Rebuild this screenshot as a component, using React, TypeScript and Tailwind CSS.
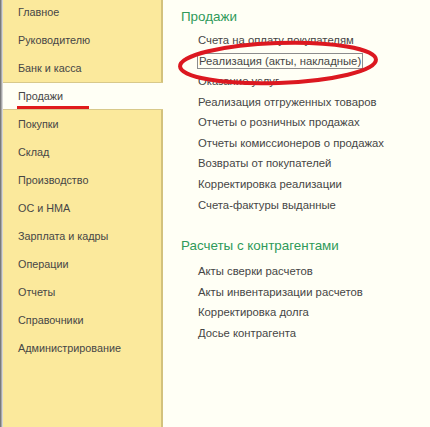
import React from 'react'

const sections = [
  'Главное',
  'Руководителю',
  'Банк и касса',
  'Продажи',
  'Покупки',
  'Склад',
  'Производство',
  'ОС и НМА',
  'Зарплата и кадры',
  'Операции',
  'Отчеты',
  'Справочники',
  'Администрирование',
]

const sales = [
  'Счета на оплату покупателям',
  'Реализация (акты, накладные)',
  'Оказание услуг',
  'Реализация отгруженных товаров',
  'Отчеты о розничных продажах',
  'Отчеты комиссионеров о продажах',
  'Возвраты от покупателей',
  'Корректировка реализации',
  'Счета-фактуры выданные',
]

const settlements = [
  'Акты сверки расчетов',
  'Акты инвентаризации расчетов',
  'Корректировка долга',
  'Досье контрагента',
]

export default function App() {
  return (
    <div
      className="relative flex h-[427px] w-[430px] overflow-hidden bg-[#fffff5] text-[#464646]"
      style={{ fontFamily: '"Liberation Sans", Arial, sans-serif' }}
    >
      {/* left window edge */}
      <div className="flex w-[3px] shrink-0">
        <div className="w-px bg-[#7a7a7a]" />
        <div className="w-px bg-[#a8a8a8]" />
        <div className="w-px bg-[#d6d6d6]" />
      </div>

      {/* sections panel */}
      <nav className="flex w-[160px] shrink-0 flex-col border-r-2 border-[#d3c27c] bg-[#fbe99c] text-[10.8px]">
        <div className="mt-[-2px] flex flex-col">
          {sections.map(s => {
            const active = s === 'Продажи'
            return (
              <div
                key={s}
                className={`relative flex h-[28px] items-center pl-[15px] ${
                  active ? 'mr-[-2px] border-y border-[#d8c98a] bg-[#fffff5]' : ''
                }`}
              >
                {s}
                {active && <div className="absolute bottom-[0px] left-[14px] h-[3px] w-[72px] bg-[#e01b1b]" />}
              </div>
            )
          })}
        </div>
      </nav>

      {/* content */}
      <main className="flex flex-1 flex-col pl-[18px] pt-[8px] text-[11.3px]">
        <h2 className="text-[13.4px] leading-[18px] text-[#2f9a5a]">Продажи</h2>
        <ul className="mt-[4px] flex flex-col pl-[16px]">
          {sales.map((s, i) => (
            <li key={s} className="flex h-[20.6px] items-center">
              <span className={i === 1 ? 'border border-[#8c8c8c] px-px leading-[14px]' : 'px-px'}>{s}</span>
            </li>
          ))}
        </ul>
        <h2 className="mt-[22px] text-[13.4px] leading-[18px] text-[#2f9a5a]">Расчеты с контрагентами</h2>
        <ul className="mt-[6px] flex flex-col pl-[16px]">
          {settlements.map(s => (
            <li key={s} className="flex h-[20.6px] items-center px-px">
              {s}
            </li>
          ))}
        </ul>
      </main>

      {/* hand-drawn highlight */}
      <svg className="pointer-events-none absolute left-0 top-0" width="430" height="427">
        <ellipse
          cx="278"
          cy="63"
          rx="98"
          ry="20"
          transform="rotate(-2 278 63)"
          fill="none"
          stroke="#dc1820"
          strokeWidth="4"
        />
      </svg>
    </div>
  )
}
